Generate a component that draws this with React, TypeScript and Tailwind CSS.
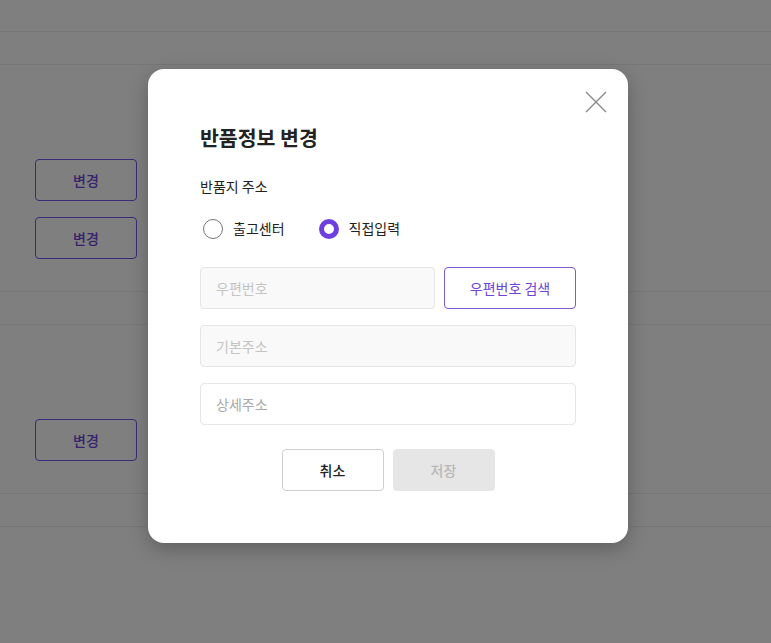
import React from "react";

const font = { fontFamily: '"Noto Sans CJK KR", "Noto Sans", sans-serif' };

function OutlineBtn() {
  return (
    <button className="w-[102px] h-[42px] rounded-[4px] border border-[#7a55f0] text-[#6e44d8] text-[14px] font-medium bg-white">
      변경
    </button>
  );
}

function Radio({ checked, label }: { checked?: boolean; label: string }) {
  return (
    <label className="flex items-center gap-[10px]">
      {checked ? (
        <span className="w-[20px] h-[20px] rounded-full border-[5px] border-[#6e3fdc] bg-white" />
      ) : (
        <span className="w-[20px] h-[20px] rounded-full border border-[#767676] bg-white" />
      )}
      <span className="text-[14px] text-[#222]">{label}</span>
    </label>
  );
}

export default function App() {
  return (
    <div style={font} className="relative w-[771px] h-[643px] overflow-hidden bg-white">
      {/* page behind the dialog */}
      <div className="flex flex-col">
        <div className="h-[32px] border-b border-[#eeeeee]" />
        <div className="h-[33px] border-b border-[#eeeeee]" />
        <div className="h-[227px] border-b border-[#eeeeee] pl-[35px] pt-[94px] flex flex-col gap-[16px]">
          <OutlineBtn />
          <OutlineBtn />
        </div>
        <div className="h-[33px] border-b border-[#eeeeee]" />
        <div className="h-[169px] border-b border-[#eeeeee] pl-[35px] pt-[94px]">
          <OutlineBtn />
        </div>
        <div className="h-[33px] border-b border-[#eeeeee]" />
      </div>

      {/* dim layer */}
      <div className="absolute inset-0 bg-black/50" />

      {/* dialog */}
      <div className="absolute left-[148px] top-[69px] w-[480px] h-[474px] bg-white rounded-[16px] shadow-[0_6px_20px_rgba(0,0,0,0.25)] px-[52px] pt-[53px]">
        <button className="absolute right-[21px] top-[22px] w-[22px] h-[22px]">
          <svg viewBox="0 0 22 22" width="22" height="22" fill="none" stroke="#8a8a8a" strokeWidth="1.4">
            <path d="M1 1 L21 21 M21 1 L1 21" />
          </svg>
        </button>
        <h2 className="text-[20.5px] leading-[30px] font-bold text-[#222]">반품정보 변경</h2>
        <p className="mt-[24px] text-[14px] leading-[20px] text-[#222]">반품지 주소</p>
        <div className="mt-[22px] flex items-center gap-[34px] pl-[3px]">
          <Radio label="출고센터" />
          <Radio checked label="직접입력" />
        </div>
        <div className="mt-[28px] flex flex-col gap-[16px]">
          <div className="flex gap-[9px]">
            <div className="flex-1 h-[42px] rounded-[4px] border border-[#e6e6e6] bg-[#f9f9f9] px-[15px] flex items-center text-[14px] text-[#c4c4c4]">
              우편번호
            </div>
            <button className="w-[132px] h-[42px] rounded-[4px] border border-[#7e5ad6] bg-white text-[14px] text-[#6e44d8]">
              우편번호 검색
            </button>
          </div>
          <div className="h-[42px] rounded-[4px] border border-[#e6e6e6] bg-[#f9f9f9] px-[15px] flex items-center text-[14px] text-[#c4c4c4]">
            기본주소
          </div>
          <div className="h-[42px] rounded-[4px] border border-[#e6e6e6] bg-white px-[15px] flex items-center text-[14px] text-[#a8a8a8]">
            상세주소
          </div>
        </div>
        <div className="mt-[24px] flex justify-center gap-[9px]">
          <button className="w-[102px] h-[42px] rounded-[4px] border border-[#cfcfcf] bg-white text-[14px] font-medium text-[#222]">
            취소
          </button>
          <button className="w-[102px] h-[42px] rounded-[4px] bg-[#e6e6e6] text-[14px] font-medium text-[#b8b8b8]">
            저장
          </button>
        </div>
      </div>
    </div>
  );
}
